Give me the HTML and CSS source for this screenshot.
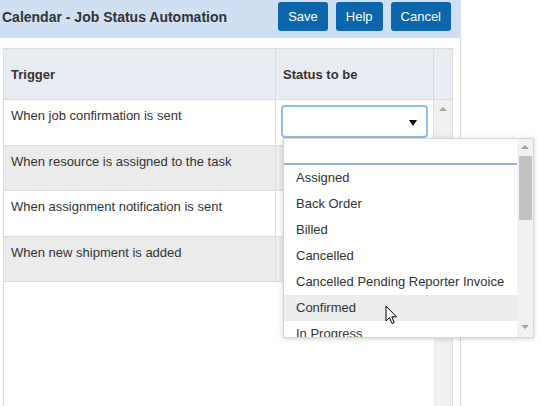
FILE: index.html
```html
<!DOCTYPE html>
<html>
<head>
<meta charset="utf-8">
<link rel="stylesheet" href="styles.css">
</head>
<body>
<div class="panel">
  <div class="topbar">
    <div class="title">Calendar - Job Status Automation</div>
    <div class="actions">
      <button class="btn">Save</button>
      <button class="btn">Help</button>
      <button class="btn">Cancel</button>
    </div>
  </div>
  <div class="grid">
    <div class="grid-head">
      <div class="th c1">Trigger</div>
      <div class="th c2">Status to be</div>
      <div class="th c3"></div>
    </div>
    <div class="grid-body">
      <div class="rows">
        <div class="row">
          <div class="td c1">When job confirmation is sent</div>
          <div class="td c2">
            <div class="select"><span class="caret"></span></div>
          </div>
        </div>
        <div class="row alt">
          <div class="td c1">When resource is assigned to the task</div>
          <div class="td c2"></div>
        </div>
        <div class="row">
          <div class="td c1">When assignment notification is sent</div>
          <div class="td c2"></div>
        </div>
        <div class="row alt">
          <div class="td c1">When new shipment is added</div>
          <div class="td c2"></div>
        </div>
      </div>
      <div class="vscroll"><span class="arrow-up"></span></div>
    </div>
  </div>

  <div class="dropdown">
    <div class="dd-main">
      <div class="dd-search"></div>
      <ul class="dd-list">
        <li>Assigned</li>
        <li>Back Order</li>
        <li>Billed</li>
        <li>Cancelled</li>
        <li>Cancelled Pending Reporter Invoice</li>
        <li class="hover">Confirmed</li>
        <li>In Progress</li>
      </ul>
    </div>
    <div class="dd-scroll">
      <span class="arrow-up"></span>
      <span class="thumb"></span>
      <span class="arrow-down"></span>
    </div>
  </div>

  <svg class="cursor" width="13" height="20" viewBox="0 0 13 20">
    <path d="M1 1 L1 16 L4.5 12.5 L7 18.5 L9.2 17.6 L6.8 11.8 L11.5 11.8 Z" fill="#fff" stroke="#000" stroke-width="1" stroke-linejoin="miter"/>
  </svg>
</div>
</body>
</html>
```

FILE: styles.css
```css
* { box-sizing: border-box; }
html, body {
  margin: 0;
  padding: 0;
  background: #fff;
  height: 100%;
  overflow: hidden;
}
body {
  font-family: "Liberation Sans", Arial, sans-serif;
  font-size: 13px;
  color: #333;
}
.panel {
  position: relative;
  width: 461px;
  height: 406px;
  border-right: 1px solid #dcdcdc;
  overflow: visible;
}
.topbar {
  height: 38px;
  background: #d0e0f4;
  display: flex;
  align-items: flex-start;
  justify-content: space-between;
  padding: 2px 9px 0 2px;
}
.title {
  font-weight: bold;
  font-size: 14px;
  color: #333;
  line-height: 30px;
}
.actions {
  display: flex;
  gap: 8px;
}
.btn {
  height: 29px;
  padding: 0 10px;
  background: #0b66ab;
  color: #fff;
  border: 0;
  border-radius: 3px;
  font-family: "Liberation Sans", Arial, sans-serif;
  font-size: 13px;
  line-height: 29px;
}
.grid {
  margin: 10px 0 0 3px;
  width: 450px;
  height: 358px;
  border: 1px solid #dcdcdc;
  border-bottom: 0;
}
.grid-head {
  display: flex;
  height: 51px;
  background: #e8ecf3;
  border-bottom: 1px solid #dcdcdc;
}
.th {
  font-weight: bold;
  display: flex;
  align-items: center;
  padding-left: 7px;
  color: #333;
}
.c1 { width: 272px; border-right: 1px solid #dcdcdc; }
.c2 { width: 158px; border-right: 1px solid #dcdcdc; }
.c3 { width: 18px; padding: 0; }
.grid-body {
  display: flex;
  height: 306px;
}
.rows {
  width: 430px;
}
.row {
  display: flex;
  height: 45.5px;
  border-bottom: 1px solid #dcdcdc;
}
.row.alt { background: #ebebeb; }
.td {
  padding: 8px 0 0 7px;
  line-height: 16px;
}
.td.c2 { padding: 5px 0 0 5px; }
.select {
  position: relative;
  width: 147px;
  height: 33px;
  border: 2px solid #93bde9;
  border-radius: 4px;
  background: #fff;
}
.caret {
  position: absolute;
  right: 9px;
  top: 13px;
  width: 0;
  height: 0;
  border-left: 4px solid transparent;
  border-right: 4px solid transparent;
  border-top: 6px solid #000;
}
.vscroll {
  width: 18px;
  background: #f0f0f0;
  display: flex;
  justify-content: center;
  padding-top: 7px;
}
.arrow-up {
  display: block;
  width: 0;
  height: 0;
  border-left: 4px solid transparent;
  border-right: 4px solid transparent;
  border-bottom: 4px solid #a3a3a3;
}
.arrow-down {
  display: block;
  width: 0;
  height: 0;
  border-left: 4px solid transparent;
  border-right: 4px solid transparent;
  border-top: 4px solid #a3a3a3;
}

.dropdown {
  position: absolute;
  left: 283px;
  top: 138px;
  width: 251px;
  height: 200px;
  background: #fff;
  border: 1px solid #d6d6d6;
  box-shadow: 0 1px 5px rgba(0, 0, 0, 0.18);
  display: flex;
  overflow: hidden;
}
.dd-main {
  width: 234px;
  overflow: hidden;
}
.dd-search {
  height: 26px;
  border-bottom: 2px solid #8fb5dc;
}
.dd-list {
  list-style: none;
  margin: 0;
  padding: 0;
}
.dd-list li {
  height: 26px;
  line-height: 26px;
  padding-left: 12px;
  white-space: nowrap;
  color: #333;
}
.dd-list li.hover { background: #ececec; }
.dd-scroll {
  width: 16px;
  background: #f1f1f1;
  display: flex;
  flex-direction: column;
  align-items: center;
  padding-top: 6px;
}
.dd-scroll .thumb {
  display: block;
  width: 13px;
  height: 64px;
  background: #c1c1c1;
  margin-top: 7px;
}
.dd-scroll .arrow-down {
  margin-top: auto;
  margin-bottom: 8px;
}
.cursor {
  position: absolute;
  left: 385px;
  top: 305px;
}
```
